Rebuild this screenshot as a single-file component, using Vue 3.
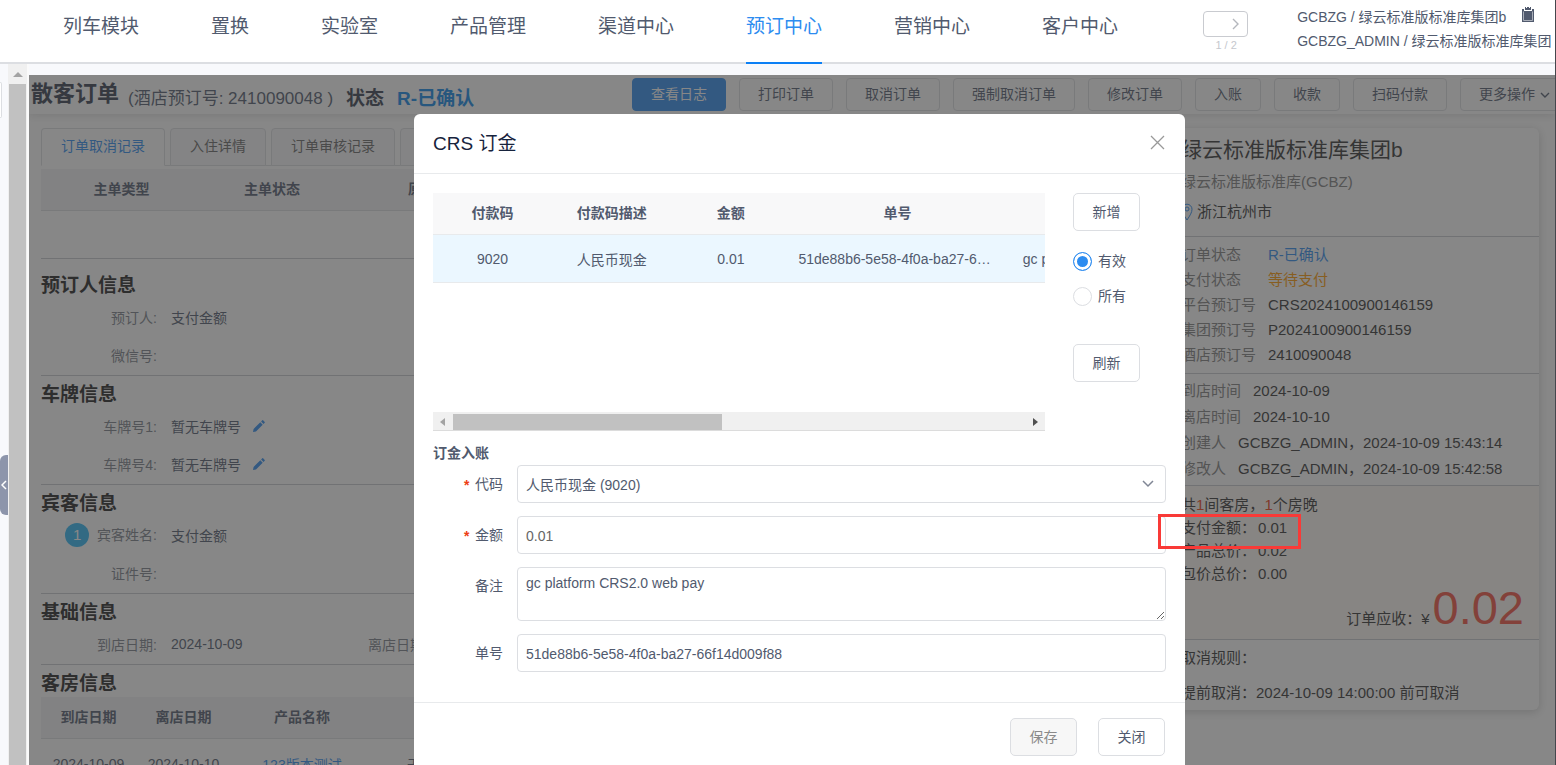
<template>
  <div class="app">
    <header class="top-nav">
      <nav class="nav-list">
        <a
          v-for="item in navs"
          :key="item"
          href="#"
          class="nav-item"
          :class="{ active: item === currentNav }"
          @click.prevent="currentNav = item"
        >{{ item }}</a>
      </nav>
      <div class="pager">
        <button type="button" class="pager-btn" aria-label="下一页">
          <svg width="8" height="12" viewBox="0 0 8 12"><path d="M1 1l5 5-5 5" fill="none" stroke="#b4b7bd" stroke-width="1.4" /></svg>
        </button>
        <span class="pager-text">1 / 2</span>
      </div>
      <div class="account">
        <div class="account-line">
          GCBZG / 绿云标准版标准库集团b
          <svg class="clipboard" width="12" height="15" viewBox="0 0 12 15">
            <path d="M0 2h2v2h8V2h2v13H0z" fill="#515a6e" />
            <path d="M3 0h1v1h1V0h2v1h1V0h1v3H3z" fill="#515a6e" />
            <path d="M1.500 4.500v9h9v-9" fill="none" stroke="#a9aeb8" stroke-width="1" />
          </svg>
        </div>
        <div class="account-line">GCBZG_ADMIN / 绿云标准版标准库集团</div>
      </div>
    </header>

    <div class="body">
      <aside class="side">
        <div class="side-box"></div>
        <button type="button" class="side-toggle" aria-label="收起">
          <svg width="6" height="10" viewBox="0 0 6 10"><path d="M5 1L1 5l4 4" fill="none" stroke="#fff" stroke-width="1.500" /></svg>
        </button>
      </aside>
      <div class="v-scroll">
        <div class="arrow-up"></div>
        <div class="v-thumb"></div>
      </div>

      <main class="page">
        <div class="page-head">
          <h1 class="page-title">散客订单</h1>
          <span class="order-no">(酒店预订号: 2410090048 )</span>
          <span class="order-state">状态</span>
          <span class="order-state blue">R-已确认</span>
          <div class="actions">
            <button
              v-for="(act, i) in actions"
              :key="act"
              type="button"
              class="act-btn"
              :class="{ primary: i === 0 }"
            >
              {{ act }}
              <svg v-if="i === actions.length - 1" class="act-arrow" width="10" height="7" viewBox="0 0 10 7"><path d="M1 1l4 4 4-4" fill="none" stroke="#515a6e" stroke-width="1.400" /></svg>
            </button>
          </div>
        </div>

        <div class="columns">
          <div class="detail">
            <div class="tabs">
              <button
                v-for="(tab, i) in tabs"
                :key="tab"
                type="button"
                class="tab"
                :class="{ on: i === 0 }"
              >{{ tab }}</button>
            </div>
            <table class="grid cancel-grid">
              <thead>
                <tr><th>主单类型</th><th>主单状态</th><th>原因</th><th></th></tr>
              </thead>
              <tbody>
                <tr><td colspan="4"></td></tr>
              </tbody>
            </table>

            <section v-for="sec in sections" :key="sec.title" class="sec">
              <h2 class="sec-title">{{ sec.title }}</h2>
              <div v-for="(row, r) in sec.rows" :key="r" class="sec-row">
                <div v-for="f in row" :key="f.label" class="field">
                  <span class="field-label">
                    <i v-if="f.no" class="guest-no">{{ f.no }}</i>{{ f.label }}:
                  </span>
                  <span class="field-value">{{ f.value }}</span>
                  <svg v-if="f.edit" class="pen" width="12" height="12" viewBox="0 0 12 12">
                    <path d="M0 12l.6-3L7.300 2.300l2.400 2.400L3 11.400zM8.100 1.500L9.300.3q.4-.4.8 0l1.600 1.600q.4.4 0 .8l-1.200 1.200z" fill="#2d8cf0" />
                  </svg>
                </div>
              </div>
            </section>

            <section class="sec last">
              <h2 class="sec-title">客房信息</h2>
              <table class="grid room-grid">
                <thead>
                  <tr><th>到店日期</th><th>离店日期</th><th>产品名称</th><th></th></tr>
                </thead>
                <tbody>
                  <tr>
                    <td>2024-10-09</td>
                    <td>2024-10-10</td>
                    <td><a href="#" @click.prevent>123版本测试</a></td>
                    <td class="left">无</td>
                  </tr>
                </tbody>
              </table>
            </section>
          </div>

          <aside class="card">
            <div class="card-block hotel">
              <h3 class="card-title">绿云标准版标准库集团b</h3>
              <p class="card-sub">绿云标准版标准库(GCBZ)</p>
              <p class="card-city">
                <svg width="12" height="18" viewBox="0 0 12 18">
                  <path d="M6 17C3 12.500 1 9.500 1 6.200a5 5 0 0 1 10 0C11 9.500 9 12.500 6 17z" fill="none" stroke="#2d8cf0" />
                  <circle cx="6" cy="6" r="2" fill="none" stroke="#2d8cf0" />
                </svg>
                <span>浙江杭州市</span>
              </p>
            </div>
            <div class="card-block order">
              <p v-for="it in orderInfo" :key="it.label">
                <span class="line-label wide">{{ it.label }}</span>
                <span :class="it.tone">{{ it.value }}</span>
              </p>
            </div>
            <div class="card-block time">
              <p v-for="it in timeInfo" :key="it.label">
                <span class="line-label">{{ it.label }}</span>
                <span>{{ it.value }}</span>
              </p>
            </div>
            <div class="card-block price">
              <p class="price-line">共<b>1</b>间客房，<b>1</b>个房晚</p>
              <p class="price-line">支付金额：<span>0.01</span></p>
              <p class="price-line">产品总价：<span>0.02</span></p>
              <p class="price-line">包价总价：<span>0.00</span></p>
              <p class="total">订单应收：¥<strong>0.02</strong></p>
            </div>
            <div class="card-block rule">
              <p>取消规则：</p>
              <p>提前取消：2024-10-09 14:00:00 前可取消</p>
            </div>
          </aside>
        </div>

        <div class="mask">
          <div class="modal" role="dialog" aria-labelledby="dlg-title">
            <div class="modal-head">
              <h2 id="dlg-title">CRS 订金</h2>
              <button type="button" class="close" aria-label="关闭弹窗">
                <svg width="15" height="15" viewBox="0 0 15 15"><path d="M1 1l13 13M14 1L1 14" stroke="#999" stroke-width="1.300" /></svg>
              </button>
            </div>
            <div class="modal-body">
              <div class="pay">
                <div class="pay-box">
                  <div class="pay-view">
                    <table class="pay-table">
                      <colgroup><col class="c1"><col class="c1"><col class="c1"><col class="c2"><col class="c2"></colgroup>
                      <thead>
                        <tr><th>付款码</th><th>付款码描述</th><th>金额</th><th>单号</th><th></th></tr>
                      </thead>
                      <tbody>
                        <tr>
                          <td>9020</td>
                          <td>人民币现金</td>
                          <td>0.01</td>
                          <td>{{ form.no }}</td>
                          <td>{{ form.remark }}</td>
                        </tr>
                      </tbody>
                    </table>
                  </div>
                  <div class="h-scroll">
                    <i class="h-left"></i>
                    <div class="h-track"><div class="h-thumb"></div></div>
                    <i class="h-right"></i>
                  </div>
                </div>
                <div class="pay-side">
                  <button type="button" class="btn">新增</button>
                  <div class="radios">
                    <label class="radio"><input v-model="scope" type="radio" name="scope" value="valid"><span>有效</span></label>
                    <label class="radio"><input v-model="scope" type="radio" name="scope" value="all"><span>所有</span></label>
                  </div>
                  <button type="button" class="btn">刷新</button>
                </div>
              </div>

              <h3 class="form-title">订金入账</h3>
              <form @submit.prevent>
                <div class="form-row">
                  <label for="code" class="required">代码</label>
                  <div class="select-box">
                    <select id="code" v-model="form.code">
                      <option value="9020">人民币现金 (9020)</option>
                    </select>
                    <svg class="select-arrow" width="12" height="8" viewBox="0 0 12 8"><path d="M1 1l5 5 5-5" fill="none" stroke="#808695" stroke-width="1.500" /></svg>
                  </div>
                </div>
                <div class="form-row">
                  <label for="amount" class="required">金额</label>
                  <input id="amount" v-model="form.amount" type="text" class="amount">
                </div>
                <div class="form-row">
                  <label for="remark">备注</label>
                  <textarea id="remark" v-model="form.remark"></textarea>
                </div>
                <div class="form-row">
                  <label for="no">单号</label>
                  <input id="no" v-model="form.no" type="text">
                </div>
              </form>
            </div>
            <div class="modal-foot">
              <button type="button" class="btn" disabled>保存</button>
              <button type="button" class="btn">关闭</button>
            </div>
          </div>
        </div>
      </main>
    </div>

    <!-- 红色标注框 -->
    <div class="mark"></div>
  </div>
</template>

<script setup>
import { reactive, ref } from 'vue'

const navs = ['列车模块', '置换', '实验室', '产品管理', '渠道中心', '预订中心', '营销中心', '客户中心']
const currentNav = ref('预订中心')

const actions = ['查看日志', '打印订单', '取消订单', '强制取消订单', '修改订单', '入账', '收款', '扫码付款', '更多操作']
const tabs = ['订单取消记录', '入住详情', '订单审核记录', '日志']

const sections = [
  {
    title: '预订人信息',
    rows: [[{ label: '预订人', value: '支付金额' }], [{ label: '微信号', value: '' }]]
  },
  {
    title: '车牌信息',
    rows: [
      [{ label: '车牌号1', value: '暂无车牌号', edit: true }],
      [{ label: '车牌号4', value: '暂无车牌号', edit: true }]
    ]
  },
  {
    title: '宾客信息',
    rows: [[{ label: '宾客姓名', value: '支付金额', no: 1 }], [{ label: '证件号', value: '' }]]
  },
  {
    title: '基础信息',
    rows: [[{ label: '到店日期', value: '2024-10-09' }, { label: '离店日期', value: '2024-10-10' }]]
  }
]

const orderInfo = [
  { label: '订单状态', value: 'R-已确认', tone: 'blue' },
  { label: '支付状态', value: '等待支付', tone: 'orange' },
  { label: '平台预订号', value: 'CRS2024100900146159' },
  { label: '集团预订号', value: 'P2024100900146159' },
  { label: '酒店预订号', value: '2410090048' }
]

const timeInfo = [
  { label: '到店时间', value: '2024-10-09' },
  { label: '离店时间', value: '2024-10-10' },
  { label: '创建人', value: 'GCBZG_ADMIN，2024-10-09 15:43:14' },
  { label: '修改人', value: 'GCBZG_ADMIN，2024-10-09 15:42:58' }
]

const scope = ref('valid')
const form = reactive({
  code: '9020',
  amount: '0.01',
  remark: 'gc platform CRS2.0 web pay',
  no: '51de88b6-5e58-4f0a-ba27-66f14d009f88'
})
</script>

<style>
html,
body,
#app {
  height: 100%;
}
body {
  margin: 0;
  overflow: hidden;
}
</style>

<style scoped>
.app {
  position: relative;
  box-sizing: border-box;
  height: 100%;
  display: flex;
  flex-direction: column;
  overflow: hidden;
  border-right: 1px solid #45474d;
  background: #f8f9fc;
  color: #515a6e;
  font-family: "Liberation Sans", "Noto Sans CJK SC", sans-serif;
  font-size: 14px;
}
.app *,
.app *::before {
  box-sizing: border-box;
}
h1, h2, h3, p {
  margin: 0;
}
button, input, select, textarea {
  font: inherit;
  color: inherit;
}
a {
  text-decoration: none;
}
i, b {
  font-style: normal;
  font-weight: normal;
}

/* 顶部导航 */
.top-nav {
  flex: none;
  display: flex;
  height: 64px;
  padding-left: 63px;
  background: #fff;
  border-bottom: 2px solid #dcdee2;
  white-space: nowrap;
}
.nav-list {
  display: flex;
  gap: 72px;
  height: 64px;
}
.nav-item {
  height: 64px;
  font-size: 19px;
  line-height: 54px;
  color: #515a6e;
}
.nav-item.active {
  color: #2d8cf0;
  border-bottom: 2px solid #0c80f5;
}
.pager {
  width: 46px;
  margin: 11px 0 0 85px;
  text-align: center;
  flex: none;
}
.pager-btn {
  display: flex;
  align-items: center;
  justify-content: flex-end;
  width: 45px;
  height: 26px;
  padding: 0 7px;
  background: #fff;
  border: 1px solid #c9cbd0;
  border-radius: 4px;
}
.pager-text {
  display: block;
  font-size: 11px;
  line-height: 16px;
  color: #c5c8ce;
}
.account {
  flex: 1;
  min-width: 0;
  overflow: hidden;
  margin: 5px 0 0 48px;
  line-height: 24px;
}
.clipboard {
  margin-left: 12px;
}

/* 左侧栏与滚动条 */
.body {
  flex: 1;
  min-height: 0;
  display: flex;
}
.side {
  position: relative;
  flex: none;
  width: 8px;
}
.side-box {
  width: 2px;
  height: 36px;
  margin-top: 18px;
  background: #fff;
  border: 1px solid #dcdee2;
  border-left: 0;
  border-radius: 0 3px 3px 0;
}
.side-toggle {
  position: absolute;
  top: 391px;
  left: 0;
  width: 8px;
  height: 60px;
  padding: 0;
  border: 0;
  border-radius: 6px 0 0 6px;
  background: #8d95ab;
}
.v-scroll {
  flex: none;
  display: flex;
  flex-direction: column;
  align-items: center;
  width: 21px;
  padding-top: 8px;
  background: #f0f0f0;
  border-right: 2px solid #fafafa;
}
.arrow-up {
  border: 5px solid transparent;
  border-top: 0;
  border-bottom-color: #a3a3a3;
  margin-bottom: 7px;
}
.v-thumb {
  flex: 1;
  width: 17px;
  background: #c1c1c1;
}

/* 订单页面 */
.page {
  position: relative;
  flex: 1;
  min-width: 0;
  margin-top: 11px;
  background: #fff;
  overflow: hidden;
}
.page-head {
  display: flex;
  height: 39px;
  padding-left: 2px;
  white-space: nowrap;
  box-shadow: 0 2px 8px rgba(0, 0, 0, 0.12);
}
.page-title {
  font-size: 22px;
  line-height: 37px;
  color: #363e4f;
}
.order-no {
  margin-left: 9px;
  font-size: 17px;
  line-height: 48px;
}
.order-state {
  margin-left: 13px;
  font-size: 19px;
  font-weight: bold;
  line-height: 48px;
  color: #363e4f;
}
.order-state.blue {
  color: #1087e8;
}
.actions {
  display: flex;
  gap: 13px;
  margin: 3px -14px 0 auto;
}
.act-btn {
  height: 33px;
  padding: 0 18px 3px;
  background: #fff;
  border: 1px solid #dcdee2;
  border-radius: 4px;
}
.act-btn.primary {
  color: #fff;
  background: #2d8cf0;
  border-color: #2d8cf0;
}
.act-arrow {
  margin-left: 1px;
}
.columns {
  display: flex;
  gap: 20px;
  padding: 14px 16px 0 12px;
  align-items: flex-start;
}
.detail {
  flex: 1;
  min-width: 0;
}
.tabs {
  display: flex;
  gap: 5px;
  height: 38px;
  border-bottom: 1px solid #dcdee2;
}
.tab {
  height: 38px;
  padding: 0 19px 4px;
  background: #f8f8f9;
  border: 1px solid #dcdee2;
  border-radius: 4px 4px 0 0;
  color: #666;
}
.tab.on {
  background: #fff;
  border-bottom-color: #fff;
  color: #2d8cf0;
}
.grid {
  width: 100%;
  table-layout: fixed;
  border-collapse: separate;
  border-spacing: 0;
}
.grid th {
  height: 42px;
  padding: 0 0 3px;
  background: #f3f3f4;
  border-bottom: 1px solid #dcdee2;
}
.grid td {
  padding: 0;
  text-align: center;
}
.cancel-grid {
  margin-top: 3px;
}
.cancel-grid th:nth-child(1) {
  width: 161px;
}
.cancel-grid th:nth-child(2) {
  width: 140px;
}
.cancel-grid th:nth-child(3) {
  width: 160px;
}
.cancel-grid td {
  height: 48px;
  border-bottom: 1px solid #c9cbd0;
}
.sec {
  border-bottom: 1px solid #c9cbd0;
}
.cancel-grid + .sec {
  padding-top: 8px;
}
.sec.last {
  border: 0;
}
.sec-title {
  padding-top: 5px;
  font-size: 19px;
  line-height: 27px;
  color: #222;
}
.sec-row {
  display: flex;
}
.field {
  display: flex;
  align-items: center;
  width: 271px;
  height: 38px;
  padding-bottom: 2px;
}
.field-label {
  width: 116px;
  margin-right: 14px;
  text-align: right;
  color: #7a7f8a;
}
.guest-no {
  display: inline-block;
  width: 24px;
  height: 24px;
  margin-right: 8px;
  border-radius: 50%;
  background: #2db7f5;
  color: #fff;
  font-size: 15px;
  line-height: 24px;
  text-align: center;
}
.pen {
  margin-left: 12px;
}
.room-grid th:nth-child(1),
.room-grid th:nth-child(2) {
  width: 95px;
}
.room-grid th:nth-child(3) {
  width: 142px;
}
.room-grid td {
  height: 50px;
}
.room-grid td.left {
  padding-left: 34px;
  text-align: left;
}
.room-grid a {
  color: #2d8cf0;
}

/* 右侧订单卡片 */
.card {
  flex: none;
  width: 370px;
  background: #fff;
  border-radius: 6px;
  box-shadow: 0 2px 10px rgba(0, 0, 0, 0.2);
  color: #333;
  font-size: 15px;
  white-space: nowrap;
}
.card-block {
  padding: 0 12px;
  border-bottom: 1px solid #c9cbd0;
}
.hotel {
  padding-top: 5px;
  padding-bottom: 9px;
}
.card-title {
  font-size: 21px;
  font-weight: normal;
  line-height: 34px;
}
.card-sub {
  line-height: 30px;
  color: #808080;
}
.card-city {
  display: flex;
  align-items: center;
  gap: 4px;
  height: 30px;
}
.card-city span {
  padding-bottom: 3px;
}
.order {
  padding-top: 5px;
  padding-bottom: 6px;
  line-height: 25px;
}
.time {
  padding-top: 4px;
  padding-bottom: 3px;
  line-height: 26px;
}
.line-label {
  display: inline-block;
  margin-right: 12px;
  color: #808080;
}
.line-label.wide {
  width: 75px;
}
.blue {
  color: #2d8cf0;
}
.orange {
  color: #f90;
}
.price {
  padding-top: 7px;
  padding-bottom: 8px;
  background: #fffaf5;
}
.price-line {
  line-height: 23px;
}
.price-line b {
  color: #ed4014;
}
.price-line span {
  margin-left: 2px;
}
.total {
  display: flex;
  justify-content: flex-end;
  align-items: baseline;
  height: 46px;
  line-height: 46px;
}
.total strong {
  margin: 0 3px;
  font-size: 47px;
  font-weight: normal;
  color: #f5523f;
}
.rule {
  border: 0;
  line-height: 35px;
}

/* 弹窗 */
.mask {
  position: absolute;
  inset: 0;
  display: flex;
  justify-content: center;
  align-items: flex-start;
  padding: 39px 0 0 15px;
  background: rgba(55, 55, 55, 0.6);
}
.modal {
  width: 771px;
  background: #fff;
  border-radius: 6px;
}
.modal-head {
  display: flex;
  align-items: center;
  justify-content: space-between;
  height: 60px;
  padding: 0 20px 2px 19px;
  border-bottom: 1px solid #e8eaec;
}
.modal-head h2 {
  padding-bottom: 2px;
  font-size: 19px;
  font-weight: normal;
  color: #17233d;
}
.close {
  display: flex;
  padding: 0;
  border: 0;
  background: none;
}
.modal-body {
  padding: 19px 19px 30px;
}
.pay {
  display: flex;
  gap: 28px;
}
.pay-box {
  flex: 1;
  min-width: 0;
}
.pay-view {
  height: 219px;
  overflow: hidden;
}
.pay-table {
  width: 786px;
  table-layout: fixed;
  border-collapse: separate;
  border-spacing: 0;
}
.c1 {
  width: 119px;
}
.c2 {
  width: 214px;
}
.pay-table th {
  height: 42px;
  padding: 0 0 3px;
  background: #f8f8f9;
  border-bottom: 1px solid #e8eaec;
}
.pay-table td {
  height: 48px;
  padding: 0 8px;
  background: #ebf7ff;
  border-bottom: 1px solid #e8eaec;
  text-align: center;
  overflow: hidden;
  white-space: nowrap;
  text-overflow: ellipsis;
}
.h-scroll {
  display: flex;
  align-items: center;
  justify-content: space-between;
  height: 19px;
  padding: 1px 7px 0;
  background: #f0f0f0;
  border-bottom: 1px solid #dcdcdc;
}
.h-left,
.h-right {
  border: 4px solid transparent;
}
.h-left {
  border-left-width: 0;
  border-right: 5px solid #a3a3a3;
}
.h-right {
  border-right-width: 0;
  border-left: 5px solid #505050;
}
.h-track {
  flex: 1;
  margin: 0 8px;
}
.h-thumb {
  width: 47%;
  height: 16px;
  background: #c1c1c1;
}
.pay-side {
  width: 93px;
}
.btn {
  width: 67px;
  height: 38px;
  padding: 0 0 3px;
  background: #fff;
  border: 1px solid #dcdee2;
  border-radius: 5px;
}
.btn:disabled {
  background: #f7f7f7;
  color: #8a8a8a;
}
.radios {
  display: flex;
  flex-direction: column;
  height: 113px;
  padding-top: 13px;
}
.radio {
  display: flex;
  align-items: center;
  gap: 6px;
  height: 35px;
}
.radio span {
  padding-bottom: 3px;
}
.radio input {
  appearance: none;
  width: 19px;
  height: 19px;
  margin: 0;
  border: 1px solid #dcdee2;
  border-radius: 50%;
  background: #fff;
}
.radio input:checked {
  border-color: #2d8cf0;
  background: #2d8cf0;
  box-shadow: inset 0 0 0 3px #fff;
}
.form-title {
  padding-top: 10px;
  font-size: 14px;
  line-height: 24px;
}
.form-row {
  display: flex;
  align-items: flex-start;
  margin-bottom: 13px;
}
.form-row:last-child {
  margin-bottom: 0;
}
.form-row > label {
  width: 84px;
  height: 38px;
  padding-right: 14px;
  line-height: 38px;
  text-align: right;
}
.required::before {
  content: '*';
  display: inline-block;
  margin-right: 4px;
  color: #ed4014;
  font-family: "Liberation Mono", monospace;
  font-weight: bold;
  line-height: 14px;
  vertical-align: -2px;
}
.form-row input,
.form-row textarea,
.select-box {
  flex: 1;
  min-width: 0;
}
.form-row input,
.form-row select,
.form-row textarea {
  display: block;
  height: 38px;
  padding: 1px 8px 0;
  background: #fff;
  border: 1px solid #dcdee2;
  border-radius: 4px;
  outline: none;
}
.form-row .amount {
  color: #666;
}
.form-row textarea {
  height: 54px;
  padding: 6px 8px;
  line-height: 18px;
}
.select-box {
  position: relative;
}
.form-row select {
  width: 100%;
  appearance: none;
}
.select-arrow {
  position: absolute;
  top: 15px;
  right: 12px;
  pointer-events: none;
}
.modal-foot {
  display: flex;
  justify-content: flex-end;
  gap: 21px;
  padding: 15px 20px;
  border-top: 1px solid #e8eaec;
}

.mark {
  position: absolute;
  top: 514px;
  right: 254px;
  width: 143px;
  height: 35px;
  border: 3px solid #f93a37;
}
</style>
